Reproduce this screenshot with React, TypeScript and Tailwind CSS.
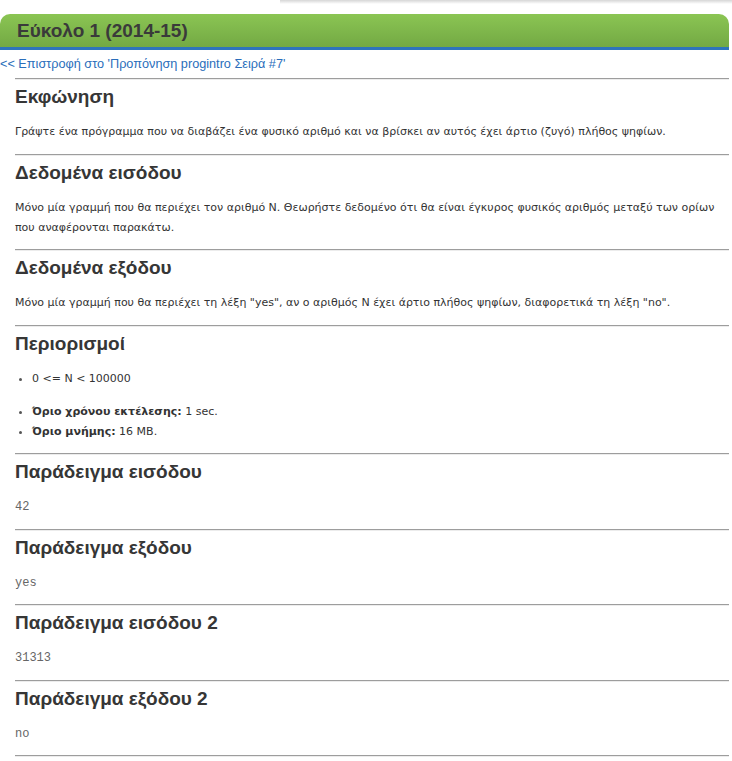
import React from "react";

function Section({ title, children }: { title: string; children: React.ReactNode }) {
  return (
    <div>
      <div className="border-t border-t-[#9d9d9d] border-b border-b-[#ececec]" />
      <h2 className="mt-[6px] text-[19px] leading-[22px] font-bold text-[#363636] font-['Liberation_Sans',Arial,sans-serif]">
        {title}
      </h2>
      <div className="mt-[14px] mb-[11.5px]">{children}</div>
    </div>
  );
}

function Para({ children }: { children: React.ReactNode }) {
  return (
    <p className="text-[11px] leading-[20px] text-[#333] font-['DejaVu_Sans',Verdana,sans-serif]">
      {children}
    </p>
  );
}

function Sample({ children }: { children: React.ReactNode }) {
  return (
    <pre className="text-[12px] leading-[20px] text-[#666] font-['Liberation_Mono','Courier_New',monospace]">
      {children}
    </pre>
  );
}

export default function App() {
  return (
    <div className="w-[732px] h-[761px] bg-white overflow-hidden">
      {/* σκιά επάνω */}
      <div className="ml-[280px] h-[4px] bg-gradient-to-b from-[#d6d6d6] to-white" />

      {/* Τίτλος */}
      <div className="mt-[10px] w-[729px] h-[36px] rounded-t-[10px] bg-gradient-to-b from-[#8bc553] to-[#73a944] border-b-[3px] border-b-[#2e74bc] pl-[17px] pt-[2px] flex items-center">
        <h1 className="text-[19px] font-bold text-[#3a3a3a] font-['Liberation_Sans',Arial,sans-serif]">
          Εύκολο 1 (2014-15)
        </h1>
      </div>

      {/* Επιστροφή */}
      <div className="h-[24px] leading-[24px]">
        <a className="text-[12.7px] text-[#2a6ebb] font-['Liberation_Sans',Arial,sans-serif]" href="#">
          &lt;&lt; Επιστροφή στο 'Προπόνηση progintro Σειρά #7'
        </a>
      </div>

      <div className="pl-[15px] w-[729px]">
        <div className="mt-[4px]">
          <Section title="Εκφώνηση">
            <Para>
              Γράψτε ένα πρόγραμμα που να διαβάζει ένα φυσικό αριθμό και να βρίσκει αν αυτός έχει άρτιο (ζυγό) πλήθος ψηφίων.
            </Para>
          </Section>
        </div>

        <Section title="Δεδομένα εισόδου">
          <Para>
            Μόνο μία γραμμή που θα περιέχει τον αριθμό Ν. Θεωρήστε δεδομένο ότι θα είναι έγκυρος φυσικός αριθμός μεταξύ των ορίων που αναφέρονται παρακάτω.
          </Para>
        </Section>

        <Section title="Δεδομένα εξόδου">
          <Para>
            Μόνο μία γραμμή που θα περιέχει τη λέξη "yes", αν ο αριθμός Ν έχει άρτιο πλήθος ψηφίων, διαφορετικά τη λέξη "no".
          </Para>
        </Section>

        <Section title="Περιορισμοί">
          <ul className="list-disc pl-[17px] text-[11px] leading-[20px] text-[#333] font-['DejaVu_Sans',Verdana,sans-serif] marker:text-[#555]">
            <li>0 &lt;= N &lt; 100000</li>
          </ul>
          <ul className="mt-[13px] list-disc pl-[17px] text-[11px] leading-[20px] text-[#333] font-['DejaVu_Sans',Verdana,sans-serif] marker:text-[#555]">
            <li>
              <b>Όριο χρόνου εκτέλεσης:</b> 1 sec.
            </li>
            <li>
              <b>Όριο μνήμης:</b> 16 MB.
            </li>
          </ul>
        </Section>

        <Section title="Παράδειγμα εισόδου">
          <Sample>42</Sample>
        </Section>

        <Section title="Παράδειγμα εξόδου">
          <Sample>yes</Sample>
        </Section>

        <Section title="Παράδειγμα εισόδου 2">
          <Sample>31313</Sample>
        </Section>

        <Section title="Παράδειγμα εξόδου 2">
          <Sample>no</Sample>
        </Section>

        <div className="border-t border-t-[#9d9d9d] border-b border-b-[#ececec]" />
      </div>
    </div>
  );
}
